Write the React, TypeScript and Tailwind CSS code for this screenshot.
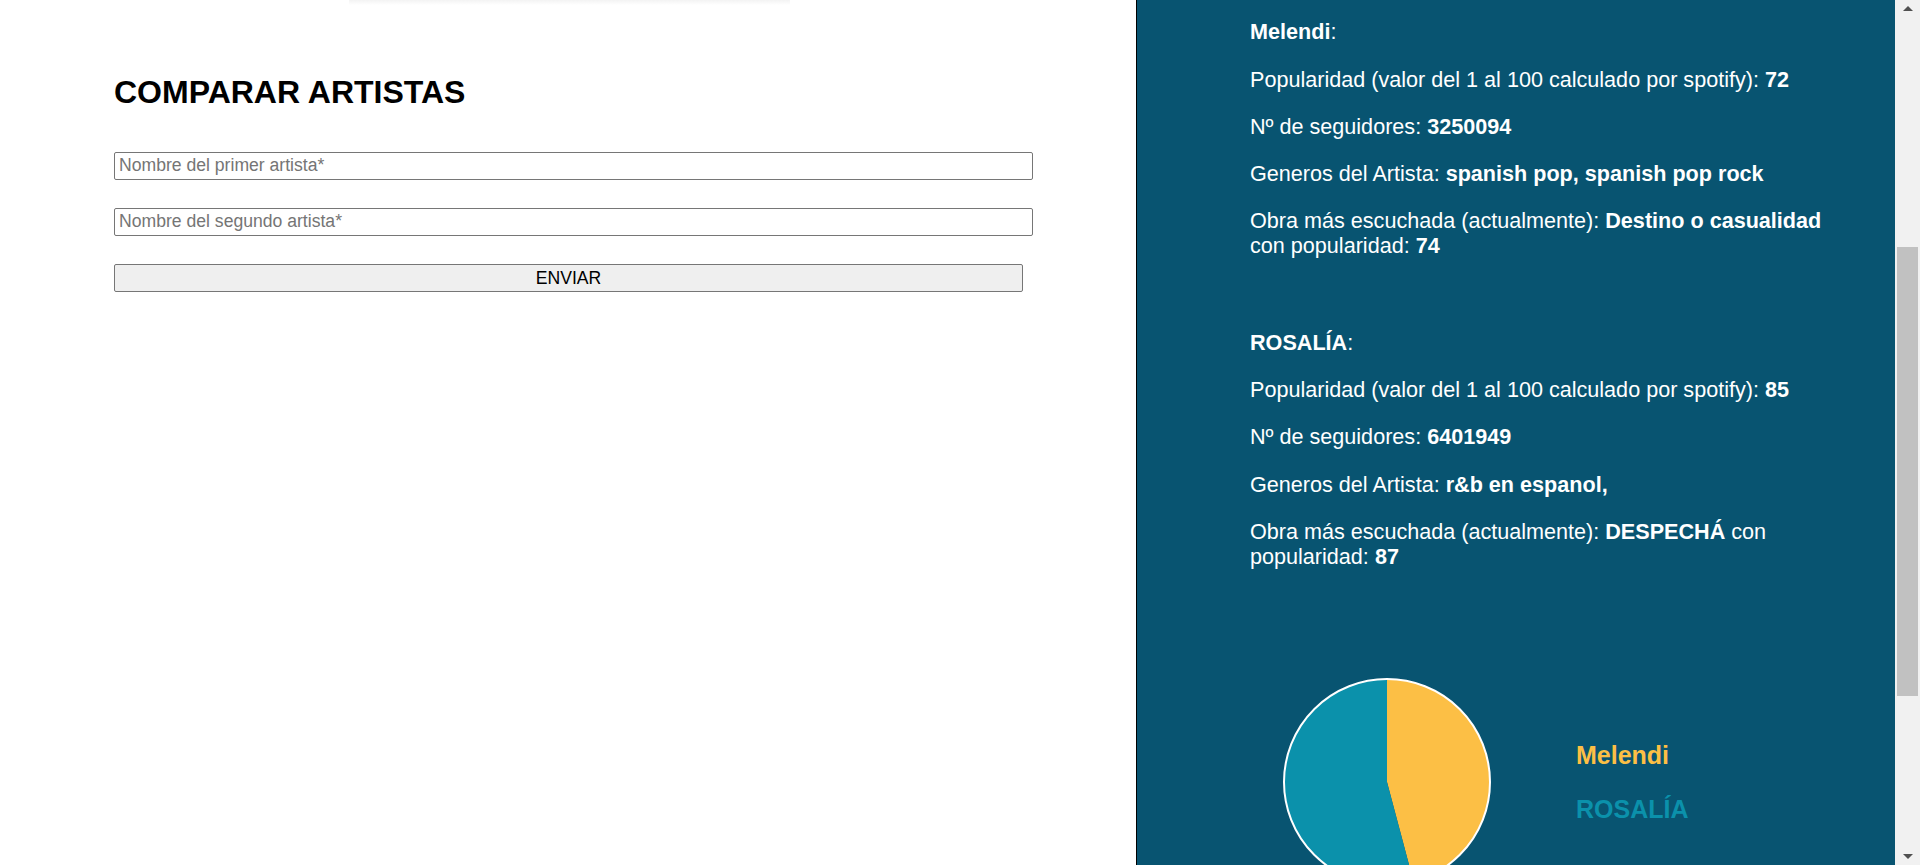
import React from "react";

type Artist = {
  name: string;
  popularity: number;
  followers: number;
  genres: string;
  topTrack: string;
  topTrackPopularity: number;
  color: string;
};

const artists: Artist[] = [
  {
    name: "Melendi",
    popularity: 72,
    followers: 3250094,
    genres: "spanish pop, spanish pop rock",
    topTrack: "Destino o casualidad",
    topTrackPopularity: 74,
    color: "#fcbf45",
  },
  {
    name: "ROSALÍA",
    popularity: 85,
    followers: 6401949,
    genres: "r&b en espanol,",
    topTrack: "DESPECHÁ",
    topTrackPopularity: 87,
    color: "#0b91ab",
  },
];

function point(cx: number, cy: number, r: number, deg: number) {
  const rad = (deg * Math.PI) / 180;
  return [cx + r * Math.sin(rad), cy - r * Math.cos(rad)];
}

function PieChart({ data }: { data: Artist[] }) {
  const cx = 105;
  const cy = 105;
  const r = 103;
  const total = data.reduce((acc, a) => acc + a.popularity, 0);
  let start = 0;

  return (
    <svg width="210" height="210" viewBox="0 0 210 210" className="shrink-0">
      {data.map((a) => {
        const sweep = (a.popularity / total) * 360;
        const [x1, y1] = point(cx, cy, r, start);
        const [x2, y2] = point(cx, cy, r, start + sweep);
        const large = sweep > 180 ? 1 : 0;
        start += sweep;
        return (
          <path
            key={a.name}
            d={`M${cx},${cy} L${x1},${y1} A${r},${r} 0 ${large} 1 ${x2},${y2} Z`}
            fill={a.color}
          />
        );
      })}
      <circle cx={cx} cy={cy} r={r} fill="none" stroke="#ffffff" strokeWidth="2" />
    </svg>
  );
}

function ArtistInfo({ artist }: { artist: Artist }) {
  return (
    <div className="flex flex-col gap-[22.3px]">
      <p>
        <b>{artist.name}</b>:
      </p>
      <p>
        Popularidad (valor del 1 al 100 calculado por spotify): <b>{artist.popularity}</b>
      </p>
      <p>
        Nº de seguidores: <b>{artist.followers}</b>
      </p>
      <p>
        Generos del Artista: <b>{artist.genres}</b>
      </p>
      <p>
        Obra más escuchada (actualmente): <b>{artist.topTrack}</b> con popularidad:{" "}
        <b>{artist.topTrackPopularity}</b>
      </p>
    </div>
  );
}

export default function App() {
  return (
    <div className="flex h-[865px] w-[1920px] overflow-hidden bg-white font-['Liberation_Sans',Arial,sans-serif]">
      {/* formulario */}
      <div className="w-[1136px] shrink-0 pl-[114px]">
        <div className="ml-[235px] h-[5px] w-[441px] bg-linear-to-b from-[#f3f3f3] to-white" />
        <h1 className="mt-[68.5px] text-[32px] font-bold leading-[1.15] text-black">
          COMPARAR ARTISTAS
        </h1>
        <form className="mt-[41.7px] flex flex-col gap-[28px]" onSubmit={(e) => e.preventDefault()}>
          <input
            type="text"
            placeholder="Nombre del primer artista*"
            className="h-[28px] w-[919px] rounded-[2px] border border-[#767676] bg-white px-[4px] text-[17.6px] text-black placeholder:text-[#757575]"
          />
          <input
            type="text"
            placeholder="Nombre del segundo artista*"
            className="h-[28px] w-[919px] rounded-[2px] border border-[#767676] bg-white px-[4px] text-[17.6px] text-black placeholder:text-[#757575]"
          />
          <button
            type="submit"
            className="h-[28px] w-[909px] rounded-[2px] border border-[#767676] bg-[#efefef] text-[17.6px] text-black"
          >
            ENVIAR
          </button>
        </form>
      </div>

      {/* resultados */}
      <div className="w-[759px] shrink-0 border-l border-black bg-[#085471] pl-[113px] pt-[19.3px] text-[21.6px] leading-[25px] text-white">
        <div className="flex w-[590px] flex-col gap-[71.4px]">
          {artists.map((a) => (
            <ArtistInfo key={a.name} artist={a} />
          ))}
        </div>
        <div className="ml-[32px] mt-[108px] flex items-center gap-[84px]">
          <PieChart data={artists} />
          <div className="flex flex-col gap-[25.5px] text-[25px] font-bold leading-[1.15]">
            {artists.map((a) => (
              <span key={a.name} style={{ color: a.color }}>
                {a.name}
              </span>
            ))}
          </div>
        </div>
      </div>

      {/* barra de scroll */}
      <div className="flex w-[25px] shrink-0 flex-col bg-[#f1f1f1]">
        <div className="flex h-[11px] items-end justify-center">
          <div className="h-0 w-0 border-x-[5.5px] border-b-[5px] border-x-transparent border-b-[#505050]" />
        </div>
        <div className="flex-1 px-[2px] pt-[236px]">
          <div className="h-[449px] w-full bg-[#c1c1c1]" />
        </div>
        <div className="flex h-[11px] items-start justify-center">
          <div className="h-0 w-0 border-x-[5.5px] border-t-[5px] border-x-transparent border-t-[#505050]" />
        </div>
      </div>
    </div>
  );
}
